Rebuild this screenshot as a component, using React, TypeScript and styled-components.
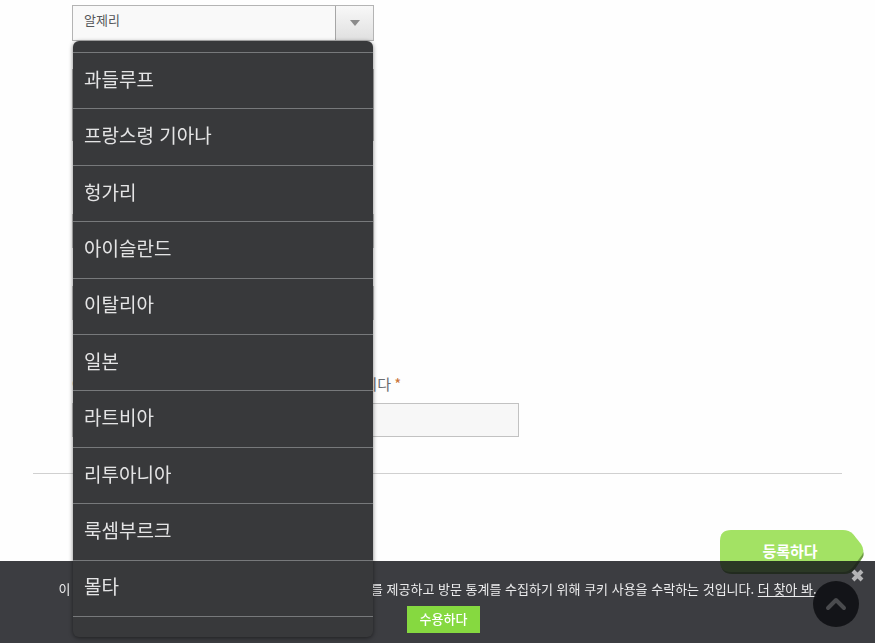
import React from "react";
import styled, { createGlobalStyle } from "styled-components";

const fontStack = '"Noto Sans CJK KR", "Noto Sans CJK JP", "Noto Sans CJK SC", sans-serif';

const GlobalStyle = createGlobalStyle`
  *, *::before, *::after { box-sizing: border-box; }
  body {
    margin: 0;
    background: #fefefe;
    color: #6a6c70;
    font-family: ${fontStack};
    font-size: 15px;
  }
  button, input, select, textarea { font-family: inherit; }
`;

const Page = styled.main`
  padding: 5px 33px 70px;
`;

const Form = styled.form`
  display: flex;
  flex-direction: column;
`;

const Fields = styled.div`
  display: flex;
  flex-direction: column;
  align-items: flex-start;
  padding: 0 39px 36px;
`;

const SelectBox = styled.div`
  position: relative;
  z-index: 20;
  display: flex;
  width: 302px;
  height: 36px;
  border: 1px solid #b4b4b4;
  background: #f9f9f9;
`;

const CountrySelect = styled.select`
  flex: 1;
  appearance: none;
  border: 0;
  padding: 0 11px 8px;
  background: transparent;
  color: #55575a;
  font-size: 13px;
  outline: none;
`;

const ArrowCell = styled.span`
  display: flex;
  align-items: center;
  justify-content: center;
  width: 38px;
  border-left: 1px solid #a6a6a6;
  background: linear-gradient(#f8f8f8, #e0e0e0);
  pointer-events: none;
`;

const Menu = styled.ul`
  position: absolute;
  top: 35px;
  left: 0;
  right: 0;
  display: flex;
  flex-direction: column;
  height: 596px;
  margin: 0;
  padding: 11px 0 20px;
  border-radius: 6px;
  background: #38393b;
  box-shadow: 0 1px 4px rgba(0, 0, 0, 0.5);
  list-style: none;
`;

const Option = styled.li`
  flex: 1;
  display: flex;
  align-items: center;
  padding: 0 11px 4px;
  border-bottom: 1px solid #77797b;
  color: #e4e4e5;
  font-size: 19px;
  line-height: 24px;

  &:first-child { border-top: 1px solid #77797b; }
`;

const Message = styled.textarea`
  width: 302px;
  height: 72px;
  margin-top: 28px;
  border: 1px solid #b4b4b4;
  background: #f9f9f9;
  resize: none;
`;

const TextInput = styled.input<{ $wide?: boolean; $gap: number }>`
  width: ${(p) => (p.$wide ? 447 : 302)}px;
  max-width: 100%;
  height: 34px;
  margin-top: ${(p) => p.$gap}px;
  padding: 0 11px;
  border: 1px solid #c2c2c2;
  background: #f7f7f7;
  font-size: 13px;
`;

const FieldLabel = styled.label`
  margin-top: 52px;
  line-height: 24px;
  white-space: nowrap;
`;

const Required = styled.span`
  margin-left: 3px;
  color: #c97438;
`;

const Divider = styled.hr`
  width: 100%;
  height: 1px;
  margin: 0;
  border: 0;
  background: #d0d0d0;
`;

const Actions = styled.div`
  display: flex;
  justify-content: flex-end;
  margin: 56px -22px 0 0;
`;

const SubmitButton = styled.button`
  display: grid;
  place-items: center;
  width: 144px;
  height: 44px;
  padding: 0;
  border: 0;
  background: transparent;
  color: #fff;
  font-size: 15px;
  font-weight: 700;

  & > * { grid-area: 1 / 1; }
  & > span { padding: 0 4px 4px 0; }
`;

const CookieBar = styled.section`
  position: fixed;
  inset: auto 0 0;
  z-index: 10;
  display: flex;
  flex-direction: column;
  align-items: center;
  gap: 7px;
  padding: 18px 20px 10px;
  background: rgba(17, 18, 23, 0.82);
  color: #ececed;
  font-size: 13px;
  line-height: 20px;
`;

const CookieText = styled.p`
  margin: 0;
  white-space: nowrap;
`;

const MoreLink = styled.a`
  color: inherit;
  text-underline-offset: 2px;
`;

const AcceptButton = styled.button`
  height: 27px;
  margin-left: 12px;
  padding: 0 13px 2px;
  border: 0;
  background: #86d940;
  color: #fff;
  font-size: 13px;
  font-weight: 500;
`;

const CloseButton = styled.button`
  position: absolute;
  top: 7px;
  right: 10px;
  display: flex;
  padding: 0;
  border: 0;
  background: transparent;
`;

const TopButton = styled.button`
  position: fixed;
  right: 16px;
  bottom: 16px;
  z-index: 11;
  display: grid;
  place-items: center;
  width: 46px;
  height: 46px;
  padding: 0;
  border: 0;
  border-radius: 50%;
  background: rgba(17, 18, 21, 0.94);
`;

const countries = [
  "과들루프",
  "프랑스령 기아나",
  "헝가리",
  "아이슬란드",
  "이탈리아",
  "일본",
  "라트비아",
  "리투아니아",
  "룩셈부르크",
  "몰타",
];

export default function App() {
  return (
    <>
      <GlobalStyle />
      <Page lang="ko">
        <Form onSubmit={(e) => e.preventDefault()}>
          <Fields>
            <SelectBox>
              <CountrySelect aria-label="국가" defaultValue="알제리">
                <option>알제리</option>
                {countries.map((name) => (
                  <option key={name}>{name}</option>
                ))}
              </CountrySelect>
              <ArrowCell>
                <svg width="10" height="6" viewBox="0 0 10 6" aria-hidden="true">
                  <path d="M0 0h10L5 6z" fill="#8b8b8b" />
                </svg>
              </ArrowCell>
              <Menu role="listbox" aria-label="국가 목록">
                {countries.map((name) => (
                  <Option key={name} role="option" aria-selected={false}>
                    {name}
                  </Option>
                ))}
              </Menu>
            </SelectBox>
            <Message aria-label="주소" />
            <TextInput $gap={73} aria-label="도시" />
            <TextInput $gap={38} aria-label="전화" />
            <FieldLabel htmlFor="code">
              아래 이미지의 4자리 문자를 입력해주시기 바랍니다
              <Required>*</Required>
            </FieldLabel>
            <TextInput $gap={7} $wide id="code" />
          </Fields>
          <Divider />
          <Actions>
            <SubmitButton type="submit">
              <svg width="144" height="44" viewBox="0 0 144 44" aria-hidden="true">
                <path
                  d="M12 2H124Q130 2 134 6L141 17Q145 22 143 27L135 39Q131 44 124 44H12Q1 44 1 33V14Q1 2 12 2Z"
                  fill="#6d9a43"
                />
                <path
                  d="M11 0H123Q129 0 133 4L141 14Q145 20 142 25L133 37Q129 42 123 42H11Q0 42 0 31V11Q0 0 11 0Z"
                  fill="#a3e264"
                />
              </svg>
              <span>등록하다</span>
            </SubmitButton>
          </Actions>
        </Form>
      </Page>
      <CookieBar lang="ko" aria-label="쿠키 안내">
        <CookieText>
          이 사이트를 계속 탐색함으로써 귀하는 맞춤형 관련 콘텐츠를 제공하고 방문 통계를
          수집하기 위해 쿠키 사용을 수락하는 것입니다. <MoreLink href="#more">더 찾아 봐.</MoreLink>
        </CookieText>
        <AcceptButton type="button">수용하다</AcceptButton>
        <CloseButton type="button" aria-label="닫기">
          <svg width="15" height="15" viewBox="0 0 15 15" aria-hidden="true">
            <path d="M3 3l9 9M12 3l-9 9" stroke="#b4b4b6" strokeWidth="4" />
          </svg>
        </CloseButton>
      </CookieBar>
      <TopButton type="button" aria-label="맨 위로">
        <svg width="22" height="14" viewBox="0 0 22 14" aria-hidden="true">
          <path
            d="M3 11l8-8 8 8"
            fill="none"
            stroke="#4a4b4e"
            strokeWidth="4"
            strokeLinecap="round"
            strokeLinejoin="round"
          />
        </svg>
      </TopButton>
    </>
  );
}
